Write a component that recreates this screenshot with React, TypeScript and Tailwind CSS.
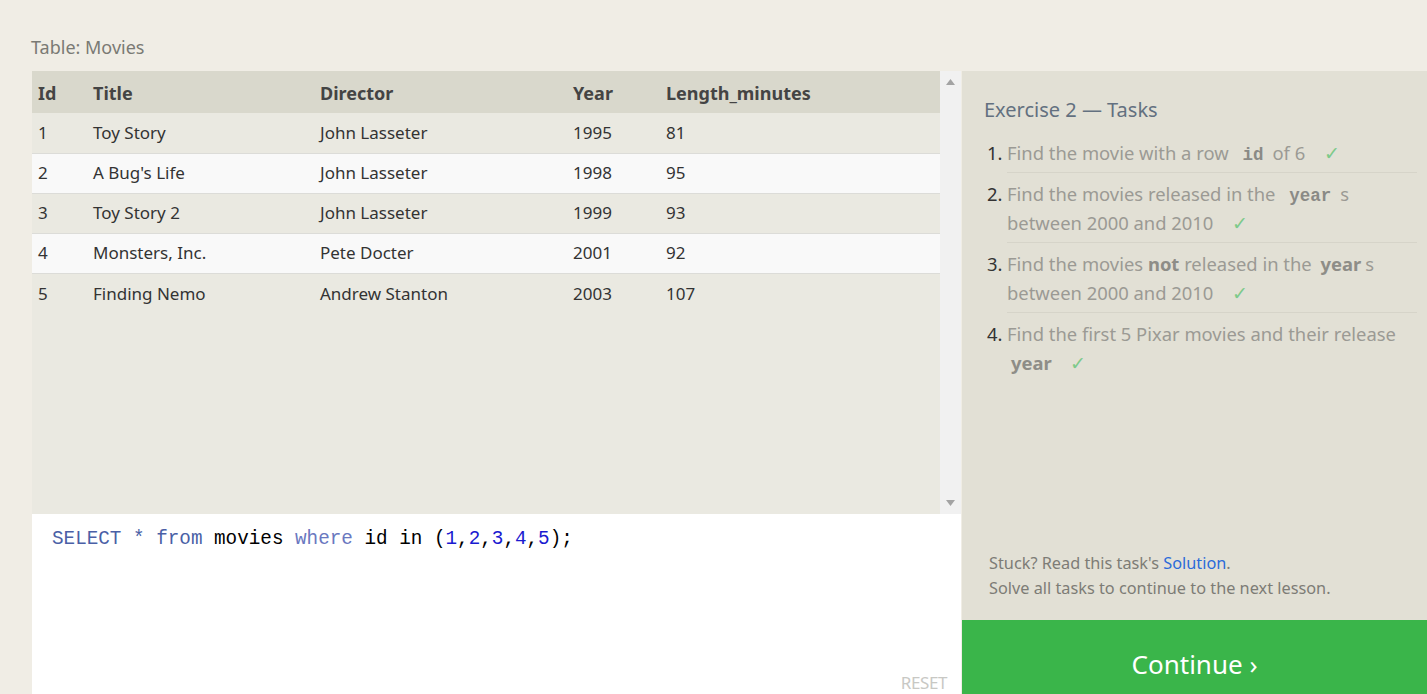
import React from 'react';

const movies = [
  { id: 1, title: 'Toy Story', director: 'John Lasseter', year: 1995, len: 81 },
  { id: 2, title: "A Bug's Life", director: 'John Lasseter', year: 1998, len: 95 },
  { id: 3, title: 'Toy Story 2', director: 'John Lasseter', year: 1999, len: 93 },
  { id: 4, title: 'Monsters, Inc.', director: 'Pete Docter', year: 2001, len: 92 },
  { id: 5, title: 'Finding Nemo', director: 'Andrew Stanton', year: 2003, len: 107 },
];

const sans = { fontFamily: '"Noto Sans", "Open Sans", sans-serif' };

function Check() {
  return <span className="ml-[14px] text-[19px] leading-none text-[#7dca8a]">✓</span>;
}

function Code({ children }: { children: React.ReactNode }) {
  return (
    <code className="px-[9px] font-bold leading-none text-[#8a8a86] font-['Liberation_Mono',monospace] text-[17.5px]">
      {children}
    </code>
  );
}

function Task({ n, children, last }: { n: number; children: React.ReactNode; last?: boolean }) {
  return (
    <li className="flex">
      <span className="w-[20px] shrink-0 text-[#333] pt-[6px]">{n}.</span>
      <div className={'flex-1 pt-[6px] pb-[5px] mr-[10px] ' + (last ? '' : 'border-b border-[#d6d4c9]')}>
        {children}
      </div>
    </li>
  );
}

export default function App() {
  return (
    <div className="h-[694px] overflow-hidden bg-[#f0ede5] pt-[34px] pl-[32px]" style={sans}>
      <div className="text-[18px] text-[#7a7a74] h-[37px] -ml-[1px]">Table: Movies</div>
      <div className="flex gap-[1px]">
        {/* left column */}
        <div className="w-[929px] flex flex-col">
          <div className="h-[443px] flex bg-[#eae9e1]">
            <div className="w-[908px]">
              <table className="w-full border-collapse text-[17px] text-[#333]">
                <thead>
                  <tr className="bg-[#d9d8cc] h-[42px] text-[#444] text-[18px]">
                    <th className="text-left font-bold pl-[6px] w-[61px] pt-[2px]">Id</th>
                    <th className="text-left font-bold w-[227px] pt-[2px]">Title</th>
                    <th className="text-left font-bold w-[253px] pt-[2px]">Director</th>
                    <th className="text-left font-bold w-[93px] pt-[2px]">Year</th>
                    <th className="text-left font-bold pt-[2px]">Length_minutes</th>
                  </tr>
                </thead>
                <tbody>
                  {movies.map((m, i) => (
                    <tr
                      key={m.id}
                      className={
                        'h-[40px] ' +
                        (i % 2 === 0 ? 'bg-[#eae9e1]' : 'bg-[#f9f9f9]') +
                        (i < movies.length - 1 ? ' border-b border-[#dcdcd8]' : '')
                      }
                    >
                      <td className="pl-[6px]">{m.id}</td>
                      <td>{m.title}</td>
                      <td>{m.director}</td>
                      <td>{m.year}</td>
                      <td>{m.len}</td>
                    </tr>
                  ))}
                </tbody>
              </table>
            </div>
            <div className="w-[21px] bg-[#f1f1f1] flex flex-col items-center justify-between py-[8px]">
              <svg width="9" height="6" viewBox="0 0 9 6">
                <path d="M4.5 0 L9 6 L0 6 Z" fill="#a3a3a3" />
              </svg>
              <svg width="9" height="6" viewBox="0 0 9 6">
                <path d="M0 0 L9 0 L4.5 6 Z" fill="#a3a3a3" />
              </svg>
            </div>
          </div>
          <div className="h-[180px] bg-white relative pl-[20px] pt-[13px]">
            <pre className="font-['Liberation_Mono',monospace] text-[19.3px] leading-[24px] text-black">
              <span className="text-[#4a5fa6]">SELECT</span> <span className="text-[#4a5fa6]">*</span>{' '}
              <span className="text-[#4a5fa6]">from</span> movies <span className="text-[#6a78c0]">where</span> id in (
              <span className="text-[#1a1ad0]">1</span>,<span className="text-[#1a1ad0]">2</span>,
              <span className="text-[#1a1ad0]">3</span>,<span className="text-[#1a1ad0]">4</span>,
              <span className="text-[#1a1ad0]">5</span>);
            </pre>
            <div className="absolute right-[14px] top-[156px] text-[17px] text-[#c8c8c4] tracking-tight">RESET</div>
          </div>
        </div>

        {/* right column */}
        <div className="flex-1 h-[640px] flex flex-col bg-[#e2e0d5]">
          <div className="flex-1 pl-[22px] pt-[25px]">
            <h2 className="text-[20px] leading-[28px] text-[#637080]">Exercise 2 — Tasks</h2>
            <ol className="mt-[8px] pl-[3px] text-[18.4px] leading-[29px] text-[#9b9a94]">
              <Task n={1}>
                Find the movie with a row <Code>id</Code>of 6 <Check />
              </Task>
              <Task n={2}>
                Find the movies released in the <Code>year</Code>s between 2000 and 2010 <Check />
              </Task>
              <Task n={3}>
                Find the movies <b className="text-[#8e8d87]">not</b> released in the{' '}
                <b className="px-[4px] text-[#8e8d87]">year</b>s between 2000 and 2010 <Check />
              </Task>
              <Task n={4} last>
                Find the first 5 Pixar movies and their release{' '}
                <b className="px-[4px] text-[#8e8d87]">year</b>
                <Check />
              </Task>
            </ol>
          </div>
          <div className="pl-[27px] pb-[19px] text-[16.3px] leading-[25px] text-[#7d7c76]">
            <div>
              Stuck? Read this task's <a className="text-[#2b6bd9]">Solution</a>.
            </div>
            <div>Solve all tasks to continue to the next lesson.</div>
          </div>
          <div className="h-[91px] bg-[#3ab54a] text-white text-[26px] flex justify-center pt-[26px] leading-[36px]">
            Continue ›
          </div>
        </div>
      </div>
    </div>
  );
}
